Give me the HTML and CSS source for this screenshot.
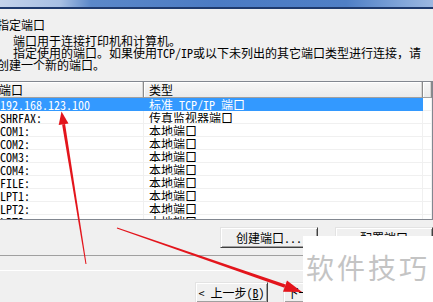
FILE: index.html
```html
<!DOCTYPE html>
<html lang="zh-CN">
<head>
<meta charset="utf-8">
<title>添加打印机 - 指定端口</title>
<link rel="stylesheet" href="styles.css">
</head>
<body>
<div class="window">
  <div class="titlebar"></div>
  <div class="intro">
    <div class="heading">指定端口</div>
    <div class="line indent">端口用于连接打印机和计算机。</div>
    <div class="line indent">指定使用的端口。如果使用TCP/IP或以下未列出的其它端口类型进行连接，请</div>
    <div class="line">创建一个新的端口。</div>
  </div>
  <div class="ports">
    <div class="row head">
      <div class="cell">端口</div><div class="cell">类型</div><div class="cell"></div>
    </div>
    <div class="rows">
      <div class="row selected"><div class="cell">192.168.123.100</div><div class="cell">标准 TCP/IP 端口</div><div class="cell"></div></div>
      <div class="row"><div class="cell">SHRFAX:</div><div class="cell">传真监视器端口</div><div class="cell"></div></div>
      <div class="row"><div class="cell">COM1:</div><div class="cell">本地端口</div><div class="cell"></div></div>
      <div class="row"><div class="cell">COM2:</div><div class="cell">本地端口</div><div class="cell"></div></div>
      <div class="row"><div class="cell">COM3:</div><div class="cell">本地端口</div><div class="cell"></div></div>
      <div class="row"><div class="cell">COM4:</div><div class="cell">本地端口</div><div class="cell"></div></div>
      <div class="row"><div class="cell">FILE:</div><div class="cell">本地端口</div><div class="cell"></div></div>
      <div class="row"><div class="cell">LPT1:</div><div class="cell">本地端口</div><div class="cell"></div></div>
      <div class="row"><div class="cell">LPT2:</div><div class="cell">本地端口</div><div class="cell"></div></div>
      <div class="row"><div class="cell">LPT3:</div><div class="cell">本地端口</div><div class="cell"></div></div>
    </div>
  </div>
  <div class="port-actions">
    <button class="btn wide">创建端口...</button>
    <button class="btn wide">配置端口</button>
  </div>
  <div class="sep"></div>
  <div class="sep-light"></div>
  <div class="nav">
    <button class="btn">&lt; 上一步(<u>B</u>)</button>
    <button class="btn">下一步(<u>N</u>) &gt;</button>
  </div>
  <svg class="arrows" width="433" height="302" viewBox="0 0 433 302">
    <polygon fill="#e3151c" points="86.5,263.9 85.5,264.1 62.1,124.5 65.1,124.1"/>
    <polygon fill="#e3151c" points="61.5,111.5 68.5,123.5 58.7,125.1"/>
    <polygon fill="#e3151c" points="116.84,228.47 117.16,227.53 285.57,284.45 284.43,287.75"/>
    <polygon fill="#e3151c" points="302,292 283,291.8 287,280.4"/>
  </svg>
  <div class="watermark">软件技巧</div>
</div>
</body>
</html>
```
FILE: styles.css
```css
html, body {
  margin: 0;
  padding: 0;
}
body {
  width: 433px;
  height: 302px;
  overflow: hidden;
  background: #f0f0f0;
  font-family: "Noto Sans Mono CJK SC", "Noto Sans CJK SC", sans-serif;
  font-size: 12px;
  color: #000;
}
.window {
  position: relative;
  width: 433px;
  height: 302px;
  overflow: hidden;
}
.titlebar {
  height: 7px;
  background: linear-gradient(to right, #c4d3eb 0%, #a7bfe3 14%, #5b88c9 21%, #4b7bc4 50%, #4f7fc6 80%, #7ea3d8 92%, #9cb8e1 100%);
  border-bottom: 2px solid #1e3a6e;
}
.intro {
  margin: 10px 0 0 -3px;
  line-height: 12px;
  white-space: nowrap;
}
.heading {
  height: 12px;
  margin-bottom: 4px;
}
.line {
  height: 12px;
}
.indent {
  padding-left: 16px;
}
.ports {
  margin: 10px 0 0 -6px;
  width: 439px;
  box-sizing: border-box;
  border: 1px solid #828790;
  background: #fff;
}
.row {
  display: grid;
  grid-template-columns: 149px 279px 1fr;
}
.cell {
  box-sizing: border-box;
  height: 13px;
  line-height: 13px;
  padding-left: 5px;
  border-right: 1px solid #f0f0f0;
  border-bottom: 1px solid #f0f0f0;
  white-space: nowrap;
  overflow: hidden;
}
.row .cell:nth-child(2) {
  padding-left: 5px;
}
.head .cell {
  height: 16px;
  line-height: 15px;
  background: linear-gradient(#f7f7f7, #ebebeb);
  border-right: 1px solid #8a8a8a;
  border-bottom: 1px solid #a0a0a0;
  box-shadow: inset -1px 0 #d5d5d5, inset 1px 1px #fff;
  padding-left: 4px;
}
.rows {
  height: 121px;
  overflow: hidden;
}
.selected .cell:nth-child(1),
.selected .cell:nth-child(2) {
  background: #3399ff;
  color: #fff;
  border-right-color: #3399ff;
  border-bottom-color: #3399ff;
}
.port-actions {
  display: flex;
  gap: 17px;
  padding-left: 220px;
  margin-top: 7px;
}
.btn {
  box-sizing: border-box;
  height: 21px;
  width: 73px;
  padding: 0;
  font: inherit;
  color: #000;
  background: #f0f0f0;
  border: 1px solid;
  border-color: #e3e3e3 #404040 #404040 #e3e3e3;
  box-shadow: inset 1px 1px #fff, inset -1px -1px #a0a0a0;
  flex: none;
  white-space: nowrap;
}
.btn u {
  text-decoration: underline;
}
.btn.wide {
  width: 98px;
}
.sep {
  margin-top: 7px;
  height: 1px;
  background: #a0a0a0;
}
.sep-light {
  margin-top: 14px;
  height: 1px;
  background: #fff;
}
.nav {
  display: flex;
  gap: 15px;
  padding-left: 195px;
  margin-top: 11px;
}
.arrows {
  position: absolute;
  left: 0;
  top: 0;
}
.watermark {
  position: absolute;
  left: 303px;
  top: 236px;
  right: 0;
  bottom: 0;
  background: #fff;
  color: #c4c4c4;
  font-family: "Noto Sans CJK SC", sans-serif;
  font-size: 28px;
  line-height: 28px;
  letter-spacing: 3px;
  padding: 17px 0 0 3px;
  white-space: nowrap;
}
```
